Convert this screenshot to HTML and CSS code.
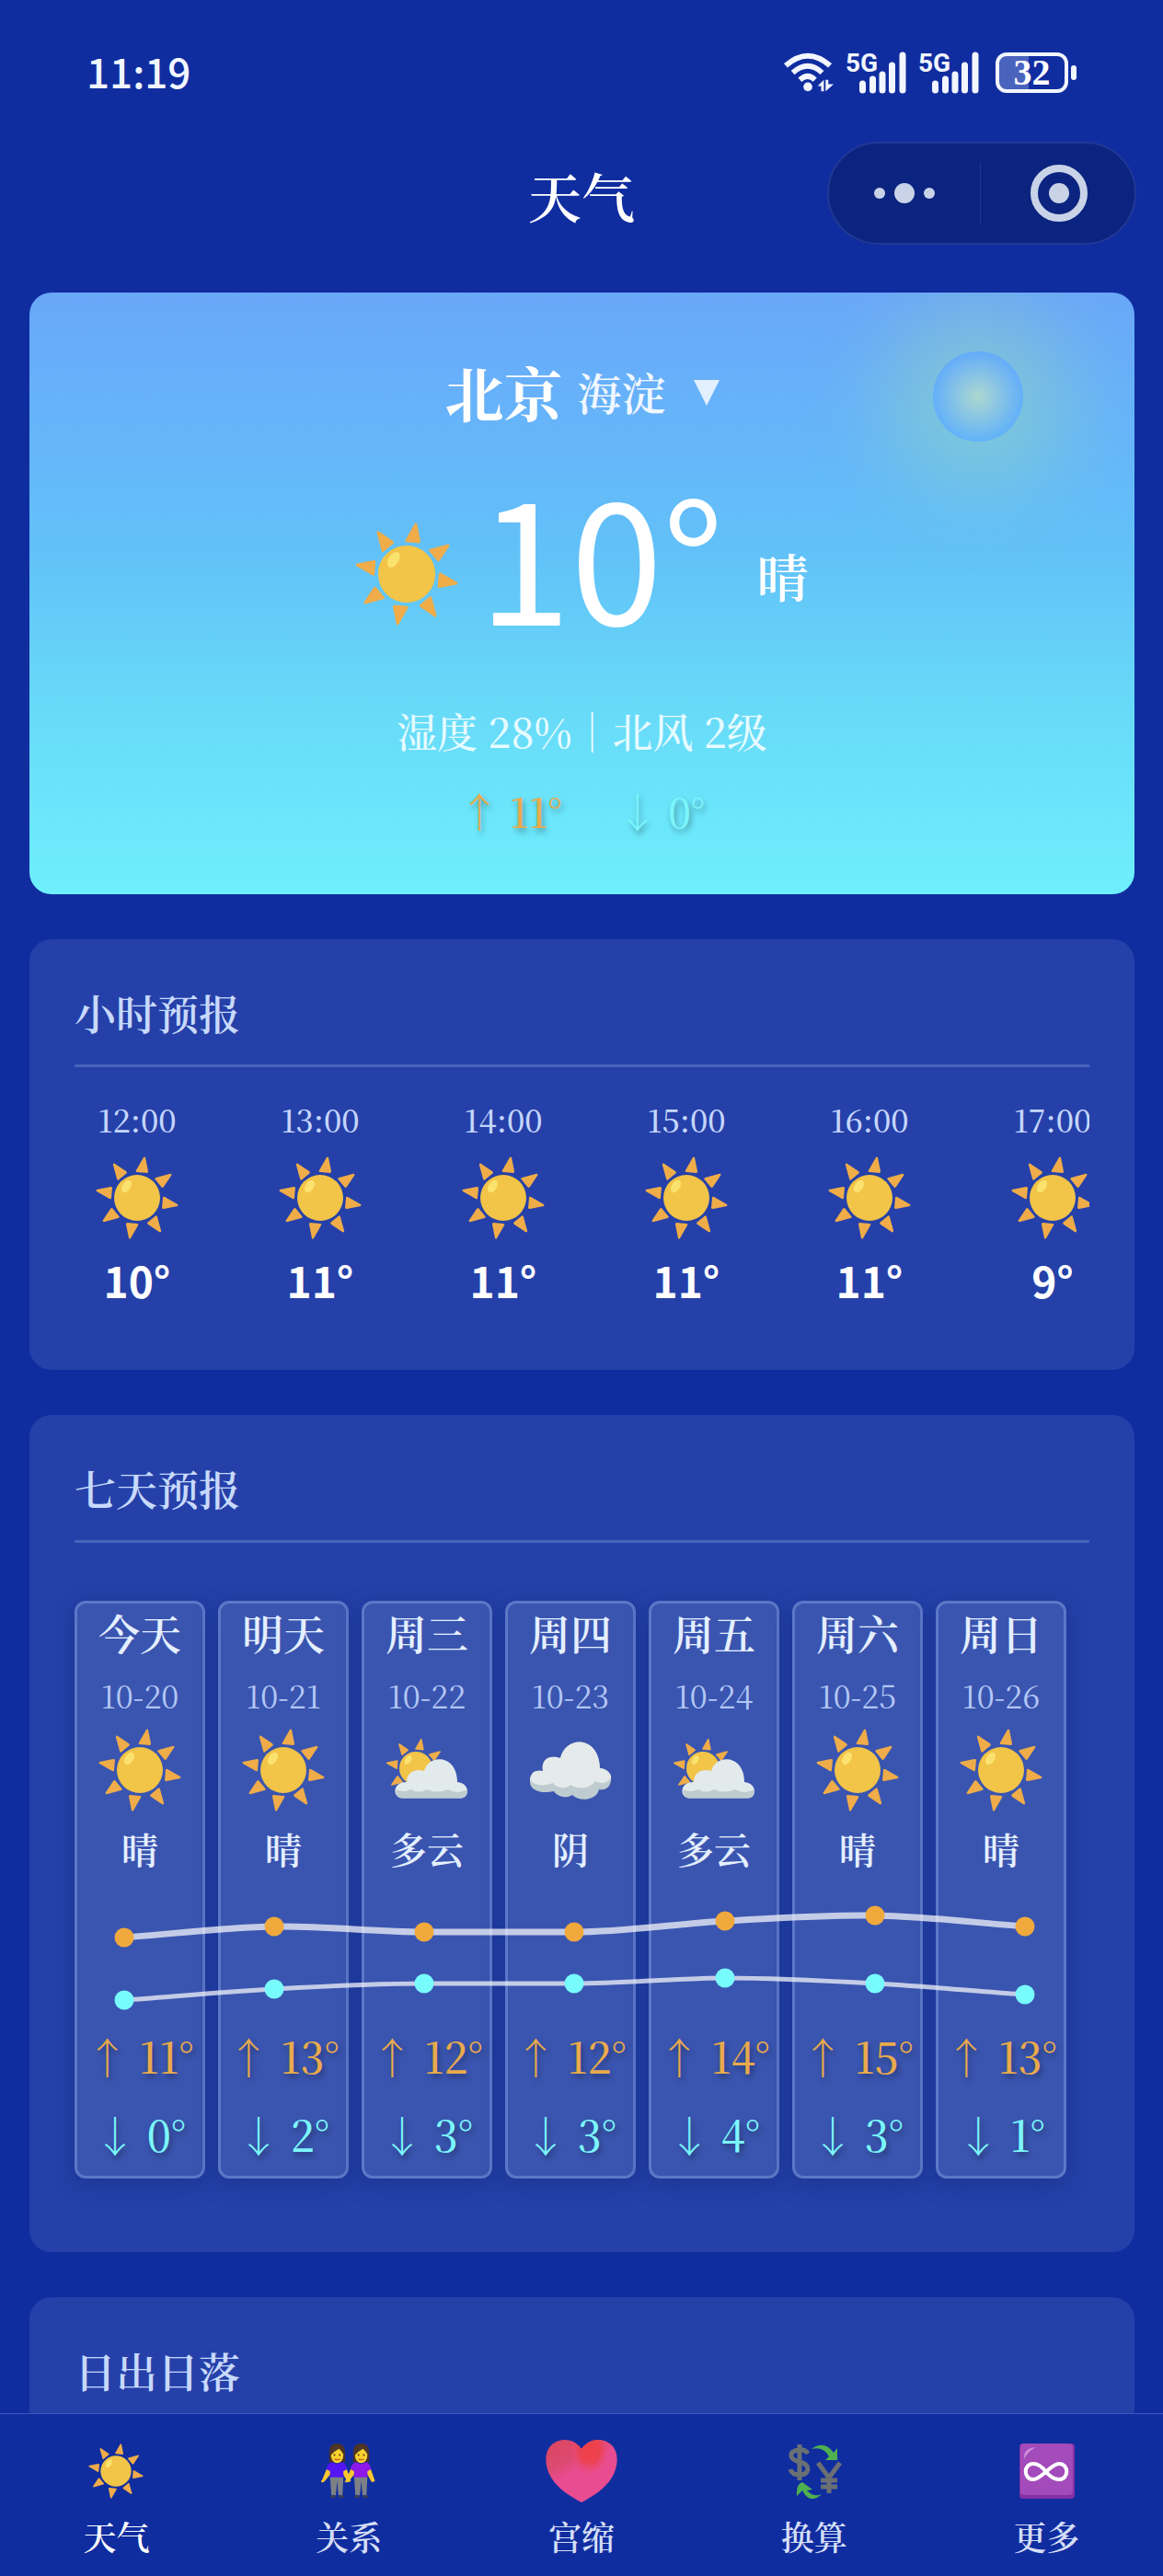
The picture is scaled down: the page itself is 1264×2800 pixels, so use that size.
FILE: index.html
```html
<!DOCTYPE html>
<html lang="zh-CN">
<head>
<meta charset="utf-8">
<meta name="viewport" content="width=device-width, initial-scale=1">
<title>天气</title>
<link rel="stylesheet" href="styles.css">
</head>
<body>
<svg class="defs" aria-hidden="true">
  <defs>
    <path id="ray" d="M54 1 Q53 0 52 1 L44 15 Q43 17 45 17 L56 18 Q57 18 57 16 Z" fill="#efac49"/>
    <g id="sun">
      <use href="#ray"/>
      <use href="#ray" transform="rotate(45 45 45)"/>
      <use href="#ray" transform="rotate(90 45 45)"/>
      <use href="#ray" transform="rotate(135 45 45)"/>
      <use href="#ray" transform="rotate(180 45 45)"/>
      <use href="#ray" transform="rotate(225 45 45)"/>
      <use href="#ray" transform="rotate(270 45 45)"/>
      <use href="#ray" transform="rotate(315 45 45)"/>
      <circle cx="45" cy="45" r="25" fill="#f2c447"/>
      <ellipse cx="33.5" cy="32.5" rx="4.5" ry="7.5" transform="rotate(33 33.5 32.5)" fill="#fbe26f"/>
    </g>
    <g id="partly">
      <use href="#sun" transform="translate(0.6 10.6) scale(0.72)"/>
      <path d="M19 75.500 C7 75.500 7 58 23 58 C23 47 33 43 42 46 C47 27 78 28 78 58 C92 59 92 75.500 81 75.500 Z" fill="#e3eaec"/>
      <path d="M12 66 Q18 70 28 66 Q36 71 45 66 Q56 71 68 66 Q78 72 89 66 Q90 75.500 81 75.500 L19 75.500 Q10 75 12 66 Z" fill="#bfcccf"/>
    </g>
    <g id="cloud">
      <path d="M1 56 C2 46 8 45 15 46 C13 34 21 28 34 32 C40 7 76 7 77 43 C86 44 90 50 89 57 C87 66 81 67 76 66 C74 78 54 80 47 72 C40 77 30 73 27 68 C14 71 0 68 1 56 Z" fill="#bfcccf"/>
      <path d="M1 56 C2 46 8 45 15 46 C13 34 21 28 34 32 C40 7 76 7 77 43 C86 44 90 50 89 54 C84 60 78 60 72 57 C66 66 53 66 45 61 C40 66 30 65 26 59 C16 63 6 62 1 56 Z" fill="#e5eaeb"/>
    </g>
  </defs>
</svg>

<div class="app">
  <div class="status">
    <time class="status-time">11:19</time>
    <div class="status-icons">
      <svg class="wifi" viewBox="0 0 56 44" aria-label="Wi-Fi">
        <g fill="none" stroke="#f2f6ff" stroke-width="6">
          <path d="M2 14 Q27 -8 52 14"/>
          <path d="M10 22 Q27 7 43 22"/>
          <path d="M18 30 Q27 22 35 30"/>
        </g>
        <circle cx="27" cy="38" r="5" fill="#f2f6ff"/>
        <path d="M38 37 L45 30 V43 H42 V37 Z M47 30 H50 V35 H56 L47 43 Z" fill="#f2f6ff"/>
      </svg>
      <svg class="signal" viewBox="0 0 66 44" aria-label="5G">
        <text x="0" y="21" class="signal-text">5G</text>
        <path d="M18.500 34 V41 M29.500 29 V41 M40 24 V41 M50.500 14 V41 M62 3 V41" class="signal-bars"/>
      </svg>
      <svg class="signal" viewBox="0 0 66 44" aria-label="5G">
        <text x="0" y="21" class="signal-text">5G</text>
        <path d="M18.500 34 V41 M29.500 29 V41 M40 24 V41 M50.500 14 V41 M62 3 V41" class="signal-bars"/>
      </svg>
      <span class="battery"><span class="battery-box">32</span></span>
    </div>
  </div>

  <header class="nav">
    <h1 class="nav-title">天气</h1>
    <div class="capsule">
      <button class="capsule-btn" type="button" aria-label="菜单">
        <svg class="dots" viewBox="0 0 66 22"><g fill="#c9d3e8"><circle cx="6" cy="11" r="6"/><circle cx="33" cy="11" r="11"/><circle cx="60" cy="11" r="6"/></g></svg>
      </button>
      <button class="capsule-btn" type="button" aria-label="关闭">
        <svg class="ring" viewBox="0 0 62 62"><circle cx="31" cy="31" r="27" fill="none" stroke="#c9d3e8" stroke-width="8"/><circle cx="31" cy="31" r="11" fill="#c9d3e8"/></svg>
      </button>
    </div>
  </header>

  <main class="content">
    <section class="hero">
      <span class="hero-glow"></span>
      <button class="city" type="button">
        <span class="city-name">北京</span>
        <span class="city-area">海淀</span>
        <svg class="city-caret" viewBox="0 0 28 28"><path d="M0 0 H28 L14 28 Z" fill="#e3f0ff"/></svg>
      </button>
      <div class="now">
        <svg class="now-icon" viewBox="0 0 90 90"><use href="#sun"/></svg>
        <span class="now-temp">10°</span>
        <span class="now-text">晴</span>
      </div>
      <p class="detail">湿度 28%｜北风 2级</p>
      <p class="range"><span class="temp high">↑ 11°</span><span class="temp low">↓ 0°</span></p>
    </section>

    <section class="card card-hours">
      <h2 class="card-title">小时预报</h2>
      <ul class="hours">
        <li class="hour"><time>12:00</time><svg class="icon" viewBox="0 0 90 90"><use href="#sun"/></svg><b>10°</b></li>
        <li class="hour"><time>13:00</time><svg class="icon" viewBox="0 0 90 90"><use href="#sun"/></svg><b>11°</b></li>
        <li class="hour"><time>14:00</time><svg class="icon" viewBox="0 0 90 90"><use href="#sun"/></svg><b>11°</b></li>
        <li class="hour"><time>15:00</time><svg class="icon" viewBox="0 0 90 90"><use href="#sun"/></svg><b>11°</b></li>
        <li class="hour"><time>16:00</time><svg class="icon" viewBox="0 0 90 90"><use href="#sun"/></svg><b>11°</b></li>
        <li class="hour"><time>17:00</time><svg class="icon" viewBox="0 0 90 90"><use href="#sun"/></svg><b>9°</b></li>
      </ul>
    </section>

    <section class="card card-days">
      <h2 class="card-title">七天预报</h2>
      <div class="week">
        <ul class="days">
          <li class="day"><span class="day-name">今天</span><time class="day-date">10-20</time><svg class="icon" viewBox="0 0 90 90"><use href="#sun"/></svg><span class="day-text">晴</span><span class="temp high">↑ 11°</span><span class="temp low">↓ 0°</span></li>
          <li class="day"><span class="day-name">明天</span><time class="day-date">10-21</time><svg class="icon" viewBox="0 0 90 90"><use href="#sun"/></svg><span class="day-text">晴</span><span class="temp high">↑ 13°</span><span class="temp low">↓ 2°</span></li>
          <li class="day"><span class="day-name">周三</span><time class="day-date">10-22</time><svg class="icon" viewBox="0 0 90 90"><use href="#partly"/></svg><span class="day-text">多云</span><span class="temp high">↑ 12°</span><span class="temp low">↓ 3°</span></li>
          <li class="day"><span class="day-name">周四</span><time class="day-date">10-23</time><svg class="icon" viewBox="0 0 90 90"><use href="#cloud"/></svg><span class="day-text">阴</span><span class="temp high">↑ 12°</span><span class="temp low">↓ 3°</span></li>
          <li class="day"><span class="day-name">周五</span><time class="day-date">10-24</time><svg class="icon" viewBox="0 0 90 90"><use href="#partly"/></svg><span class="day-text">多云</span><span class="temp high">↑ 14°</span><span class="temp low">↓ 4°</span></li>
          <li class="day"><span class="day-name">周六</span><time class="day-date">10-25</time><svg class="icon" viewBox="0 0 90 90"><use href="#sun"/></svg><span class="day-text">晴</span><span class="temp high">↑ 15°</span><span class="temp low">↓ 3°</span></li>
          <li class="day"><span class="day-name">周日</span><time class="day-date">10-26</time><svg class="icon" viewBox="0 0 90 90"><use href="#sun"/></svg><span class="day-text">晴</span><span class="temp high">↑ 13°</span><span class="temp low">↓ 1°</span></li>
        </ul>
        <svg class="trend" viewBox="0 0 1078 116" aria-hidden="true">
          <g fill="none" stroke="#fff" stroke-opacity="0.7">
            <path stroke-width="7" d="M54 36 C108 32 163 25 217 24 C271 23 326 30 380 30 L543 30 C597 30 653 21 707 18 C761 15 816 11 870 12 C924 13 979 20 1033 24"/>
            <path stroke-width="5" d="M54 104 C108 100 163 95 217 92 C271 89 326 86 380 86 L543 86 C597 86 653 80 707 80 C761 80 816 83 870 86 C924 89 979 94 1033 98"/>
          </g>
          <g fill="#f0a93c"><circle cx="54" cy="36" r="10.500"/><circle cx="217" cy="24" r="10.500"/><circle cx="380" cy="30" r="10.500"/><circle cx="543" cy="30" r="10.500"/><circle cx="707" cy="18" r="10.500"/><circle cx="870" cy="12" r="10.500"/><circle cx="1033" cy="24" r="10.500"/></g>
          <g fill="#78fbfd"><circle cx="54" cy="104" r="10.500"/><circle cx="217" cy="92" r="10.500"/><circle cx="380" cy="86" r="10.500"/><circle cx="543" cy="86" r="10.500"/><circle cx="707" cy="80" r="10.500"/><circle cx="870" cy="86" r="10.500"/><circle cx="1033" cy="98" r="10.500"/></g>
        </svg>
      </div>
    </section>

    <section class="card card-sun">
      <h2 class="card-title card-title-open">日出日落</h2>
    </section>
  </main>

  <nav class="tabs">
    <a class="tab tab-active" href="#weather">
      <span class="tab-slot"><svg class="tab-icon" viewBox="0 0 90 90"><use href="#sun"/></svg></span>天气
    </a>
    <a class="tab" href="#relation">
      <span class="tab-slot">
        <svg class="tab-icon" viewBox="0 0 62 62">
          <g id="person">
            <path d="M9 21 V10 Q9 0 18 0 Q27 0 27 10 V21 Z" fill="#4d3527"/>
            <path d="M7 28 L2 40 L0 43 L3 43 L12 32 Z M28 28 L33 42 L30 43 L24 32 Z" fill="#f9c82f" stroke="#f9c82f" stroke-width="1"/>
            <path d="M10 37 H25 L24 58 H19.500 L18 42 L16.500 58 H11.500 Z" fill="#7b8186"/>
            <path d="M11 58 H16 V61 H10 Z M20 58 H25 L26 61 H20 Z" fill="#363f55"/>
            <ellipse cx="18" cy="13" rx="7" ry="9" fill="#f9d02f"/>
            <path d="M10 14 Q11 3 18 4 Q25 3 26 14 Q23 8 20 6 Q14 9 10 14 Z" fill="#4d3527"/>
            <circle cx="15" cy="13" r="1" fill="#4d3527"/><circle cx="21" cy="13" r="1" fill="#4d3527"/>
            <path d="M15 17.500 Q18 19 21 17.500" fill="none" stroke="#b96420" stroke-width="1.500"/>
          </g>
          <use href="#person" x="27"/>
          <path d="M6 29 Q7 22 13 21 Q18 25 23 21 Q28 22 29 29 L25 31 V38 H10 V31 Z" fill="#5415f5"/>
          <path d="M33 29 Q34 22 40 21 Q45 25 50 21 Q55 22 56 29 L52 31 V38 H37 V31 Z" fill="#8d18e8"/>
        </svg>
      </span>关系
    </a>
    <a class="tab" href="#heart">
      <span class="tab-slot">
        <svg class="tab-heart" viewBox="0 0 78 68">
          <defs>
            <linearGradient id="pink" x1="0" y1="0" x2="0.6" y2="0.9"><stop offset="0" stop-color="#dc4560"/><stop offset="0.4" stop-color="#dc4a70"/><stop offset="0.6" stop-color="#e94c90"/></linearGradient>
            <radialGradient id="red"><stop offset="0" stop-color="#ef3f48"/><stop offset="0.5" stop-color="#ec4250"/><stop offset="1" stop-color="#e94c80" stop-opacity="0"/></radialGradient>
            <clipPath id="heart"><path d="M39 10 C48 -3 64 -2 72 6 C80 14 79 29 72 41 C64 54 50 62 39 68 C28 62 14 54 6 41 C-1 29 -2 14 6 6 C14 -2 30 -3 39 10 Z"/></clipPath>
          </defs>
          <g clip-path="url(#heart)"><path d="M0 0 H78 V68 H0 Z" fill="url(#pink)"/><ellipse cx="48" cy="11" rx="22" ry="28" fill="url(#red)"/></g>
        </svg>
      </span>宫缩
    </a>
    <a class="tab" href="#convert">
      <span class="tab-slot">
        <svg class="tab-icon" viewBox="0 0 60 60">
          <g fill="none" stroke="#6a7073" stroke-width="5">
            <path d="M23 11 Q20 6 13 7 Q4 8 5 14 Q6 18 14 20 Q23 22 23 28 Q22 34 14 34 Q6 34 4 28 M14 1 V40"/>
            <path d="M34 21 L46 37 L58 21 M46 36 V54 M37 40 H55 M37 47 H55"/>
          </g>
          <path d="M27 6 Q41 -4 51 10 L55 5 V18 H42 L46 14 Q40 3 27 6 Z" fill="#4fb04f"/>
          <path d="M38 55 Q25 67 17 51 L11 57 Q10 44 17 42 L28 50 L22 51 Q29 59 38 55 Z" fill="#4fb04f"/>
        </svg>
      </span>换算
    </a>
    <a class="tab" href="#more">
      <span class="tab-slot">
        <svg class="tab-icon" viewBox="0 0 60 60">
          <rect width="60" height="60" rx="4" fill="#8230a5"/>
          <rect x="1" y="0" width="57" height="56" rx="4" fill="#a34bba"/>
          <path d="M5 17 Q4 5 18 4 Q9 8 5 17 Z" fill="#cf92db"/>
          <path d="M29 31 C23 23 19 22 15 22 C4 22 4 39 15 39 C24 39 34 22 43 22 C54 22 54 39 43 39 C39 39 35 38 29 31 Z" fill="none" stroke="#fff" stroke-width="4"/>
        </svg>
      </span>更多
    </a>
  </nav>
</div>
</body>
</html>
```

FILE: styles.css
```css
:root {
  --bg: #102da0;
  --card: #2541a9;
  --mixed: "Liberation Serif", "Noto Serif CJK SC", "Noto Sans CJK SC", serif;
  --digits: "Noto Serif CJK SC", "Liberation Serif", "Noto Sans CJK SC", serif;
  --solid: "Noto Sans CJK SC", sans-serif;
}

* { box-sizing: border-box; }

body {
  margin: 0;
  background: var(--bg);
  color: #fff;
  font-family: var(--mixed);
  font-weight: 600;
}

h1, h2, p, ul { margin: 0; padding: 0; font-weight: inherit; }
ul { list-style: none; }
svg { display: block; flex: none; }
button { border: 0; padding: 0; background: none; color: inherit; font: inherit; }
.defs { position: absolute; width: 0; height: 0; }

.app { display: flex; flex-direction: column; min-height: 100vh; }

/* Status bar */
.status {
  display: flex;
  justify-content: space-between;
  align-items: flex-start;
  padding: 57px 94px 0 94px;
}
.status-time { font: 500 44px/40px var(--solid); color: #f2f6ff; }
.status-icons { display: flex; gap: 13px; height: 44px; }
.wifi { width: 54px; height: 44px; }
.signal { width: 66px; height: 44px; overflow: visible; }
.signal-text { font: 700 28px "Roboto", sans-serif; fill: #f2f6ff; }
.signal-bars { stroke: #f2f6ff; stroke-width: 7; stroke-linecap: round; }
.battery { display: flex; align-items: center; gap: 3px; margin-left: 5px; }
.battery::after { content: ""; width: 6px; height: 16px; border-radius: 3px; background: #f2f6ff; }
.battery-box {
  width: 79px;
  height: 44px;
  border: 4px solid #f2f6ff;
  border-radius: 12px;
  background: linear-gradient(90deg, #4a63bd 32px, transparent 32px);
  font: 700 40px/36px "Liberation Serif", serif;
  text-align: center;
}

/* Title bar */
.nav {
  display: grid;
  grid-template-columns: 1fr auto 1fr;
  align-items: center;
  margin-top: 53px;
  padding: 0 29px;
}
.nav-title { grid-column: 2; font-size: 58px; line-height: 84px; padding-top: 16px; }
.capsule {
  justify-self: end;
  display: flex;
  width: 336px;
  height: 112px;
  border: 2px solid #213894;
  border-radius: 56px;
  background: #0b247f;
}
.capsule-btn { flex: 1 1 0; display: grid; place-items: center; }
.capsule-btn + .capsule-btn { position: relative; padding-left: 4px; }
.capsule-btn + .capsule-btn::before {
  content: "";
  position: absolute;
  left: 0;
  top: 20px;
  width: 1px;
  height: 68px;
  background: #213894;
}
.dots { width: 66px; height: 22px; }
.ring { width: 62px; height: 62px; }

.content {
  flex: 1;
  display: flex;
  flex-direction: column;
  gap: 49px;
  padding: 52px 31px 0 32px;
}

/* Current weather */
.hero {
  position: relative;
  overflow: hidden;
  display: flex;
  flex-direction: column;
  align-items: center;
  padding: 68px 0 61px;
  border-radius: 24px;
  background: linear-gradient(180deg, #69a7f9 0%, #67b0fa 15%, #62c1f8 43%, #67d9f8 68%, #6eeffd 100%);
}
.hero-glow {
  position: absolute;
  top: 64px;
  right: 121px;
  width: 98px;
  height: 98px;
  border-radius: 50%;
  background: radial-gradient(circle, rgba(240, 255, 170, 0.65) 0%, rgba(230, 255, 150, 0) 70%);
  box-shadow: 0 0 100px 45px rgba(205, 255, 120, 0.28), inset 0 0 0 50px rgba(90, 170, 250, 0.2);
}
.city { display: flex; align-items: center; height: 78px; }
.city-name { font-size: 64px; font-weight: 700; }
.city-area { margin: 0 30px 0 16px; font-size: 48px; color: #f0f7ff; }
.city-caret { width: 28px; height: 28px; margin-top: 4px; }
.now { display: flex; align-items: center; margin-top: 38px; height: 200px; }
.now-icon { width: 112px; height: 112px; margin: 44px 22px 0 0; }
.now-temp { font: 400 180px/200px var(--solid); }
.now-text { margin: 56px 0 0 36px; font-size: 56px; line-height: 64px; }
.detail { margin-top: 60px; font: 500 44px/64px var(--digits); color: #e6fbff; }
.range { display: flex; gap: 60px; margin-top: 25px; }

.temp {
  font: 500 46px/56px var(--digits);
  text-shadow: 2px 4px 6px rgba(0, 0, 0, 0.35);
  white-space: nowrap;
}
.high { color: #e9aa4c; }
.low { color: #7cf6fb; }
.range .temp { font-size: 44px; line-height: 60px; }

/* Cards */
.card {
  padding: 52px 49px 0;
  border-radius: 24px;
  background: var(--card);
}
.card-title {
  padding-bottom: 20px;
  border-bottom: 3px solid #4764bb;
  font-size: 45px;
  line-height: 64px;
  color: #c8d9fb;
}
.card-title-open { padding-bottom: 0; border-bottom: 0; }
.icon { width: 90px; height: 90px; }

.card-hours { padding-bottom: 48px; }
.hours { display: flex; gap: 63px; margin-top: 16px; padding: 19px 0 20px; overflow: hidden; }
.hour { flex: none; display: flex; flex-direction: column; align-items: center; width: 136px; }
.hour time { margin-bottom: 18px; font: 500 34px/44px var(--digits); color: #c5d6fc; }
.hour b { margin-top: 14px; font: 700 46px/60px var(--solid); }

.card-days { padding-bottom: 80px; }
.week { position: relative; margin: 63px 25px 0 0; }
.days { display: grid; grid-template-columns: repeat(7, 1fr); gap: 14px; }
.day {
  display: flex;
  flex-direction: column;
  align-items: center;
  padding: 8px 0 18px;
  border: 3px solid #5c77c6;
  border-radius: 12px;
  background: #3a55b0;
  box-shadow: 0 6px 24px rgba(10, 35, 110, 0.4);
}
.day-name { font-size: 45px; line-height: 56px; color: #e4efff; }
.day-date { margin: 14px 0; font: 400 34px/44px var(--digits); color: #b3c7f5; }
.day-text { margin: 20px 0 169px; font-size: 40px; line-height: 48px; color: #e4efff; }
.day .low { margin-top: 29px; }
.trend { position: absolute; top: 330px; left: 0; width: 100%; }

.card-sun { flex: 1; border-radius: 24px 24px 0 0; }

/* Bottom tabs */
.tabs {
  position: sticky;
  bottom: 0;
  display: grid;
  grid-template-columns: repeat(5, 1fr);
  padding: 28px 0 16px;
  border-top: 1px solid #3d56ba;
  background: var(--bg);
}
.tab {
  display: flex;
  flex-direction: column;
  align-items: center;
  gap: 16px;
  font-size: 36px;
  line-height: 48px;
  color: #d5def5;
  text-decoration: none;
}
.tab-active { color: #fff; }
.tab-slot { display: grid; place-items: center; height: 68px; }
.tab-icon { width: 60px; height: 60px; }
.tab-heart { width: 78px; height: 68px; }
```
